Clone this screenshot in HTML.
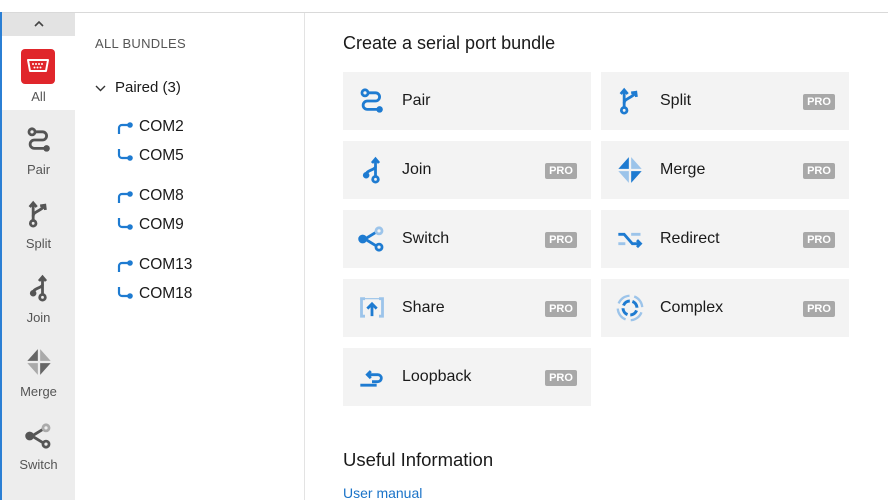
<!DOCTYPE html>
<html><head><meta charset="utf-8"><style>
*{margin:0;padding:0;box-sizing:border-box}
body{width:888px;height:500px;overflow:hidden;background:#fff;font-family:"Segoe UI","Liberation Sans",sans-serif;color:#1a1a1a;position:relative}
.topline{position:absolute;left:0;top:12px;width:888px;height:1px;background:#d9d9d9}
.blue{position:absolute;left:0;top:12px;width:2px;height:488px;background:#2b7fd4}
.side{position:absolute;left:2px;top:13px;width:73px;height:487px;background:#ededed}
.chev{position:absolute;left:0;top:0;width:73px;height:23px;background:#e3e3e3;text-align:center}
.allitem{position:absolute;left:0;top:23px;width:73px;height:74px;background:#fff}
.red{position:absolute;left:19px;top:13px;width:34px;height:35px;background:#e0262b;border-radius:4px}
.slab{position:absolute;width:73px;text-align:center;font-size:13px;color:#555}
.sico{position:absolute;left:23px;width:28px;height:28px}
.mid{position:absolute;left:75px;top:13px;width:230px;height:487px;border-right:1px solid #e3e3e3}
.hdr{position:absolute;left:20px;top:23px;font-size:13px;color:#555;letter-spacing:.3px}
.paired{position:absolute;left:20px;top:66px;font-size:15px}
.com{position:absolute;left:64px;font-size:15.5px}
.cico{position:absolute;left:42px;width:18px;height:14px}
.title{position:absolute;left:343px;top:33px;font-size:18px}
.card{position:absolute;width:248px;height:58px;background:#f3f3f3}
.card svg{position:absolute;left:15px;top:15px;width:28px;height:28px}
.card span.t{position:absolute;left:59px;top:20px;font-size:16px}
.pro{position:absolute;right:14px;top:22px;width:32px;height:16px;background:#a8a8a8;color:#fff;font-size:11px;font-weight:bold;text-align:center;line-height:16px;border-radius:2px}
.h2{position:absolute;left:343px;top:449px;font-size:18.5px}
.link{position:absolute;left:343px;top:485px;font-size:14px;color:#1a73c8}
</style></head><body>
<div class="topline"></div>
<div class="blue"></div>
<div class="side">
 <div class="chev"><svg width="12" height="8" style="margin-top:7px" viewBox="0 0 12 8"><path d="M2 6 L6 2 L10 6" fill="none" stroke="#444" stroke-width="1.6"/></svg></div>
 <div class="allitem">
  <div class="red"><svg width="34" height="35" viewBox="0 0 34 35"><path d="M7 11 H27 L25 22 H9 Z" fill="none" stroke="#fff" stroke-width="2" stroke-linejoin="round"/><g fill="#fff"><circle cx="12" cy="15" r="1"/><circle cx="15" cy="15" r="1"/><circle cx="18" cy="15" r="1"/><circle cx="21" cy="15" r="1"/><circle cx="13.5" cy="18.5" r="1"/><circle cx="16.5" cy="18.5" r="1"/><circle cx="19.5" cy="18.5" r="1"/></g></svg></div>
  <div class="slab" style="top:53px">All</div>
 </div>
 <svg class="sico" style="top:113px" viewBox="0 0 24 24" fill="none" stroke="#555" stroke-width="2.4"><circle cx="6" cy="5" r="2.6"/><path d="M8.6 5 H15 A3.5 3.5 0 0 1 15 12 H8 A3.6 3.6 0 0 0 8 19.2 H17"/><circle cx="18.5" cy="19.2" r="2.8" fill="#555" stroke="none"/></svg>
 <div class="slab" style="top:149px">Pair</div>
 <svg class="sico" style="top:187px" viewBox="0 0 24 24" fill="none" stroke="#555" stroke-width="2.4"><circle cx="7" cy="20" r="2.4"/><path d="M7 17.6 V3"/><path d="M4 6 L7 2.5 L10 6" /><path d="M7 14 C7 10 12 10 16 6"/><path d="M13 5 L17 4.5 L17.5 8.5"/></svg>
 <div class="slab" style="top:223px">Split</div>
 <svg class="sico" style="top:261px" viewBox="0 0 24 24" fill="none" stroke="#555" stroke-width="2.4"><circle cx="15" cy="20" r="2.4"/><path d="M15 17.6 V3"/><path d="M12 6 L15 2.5 L18 6"/><path d="M7 16 C7 12 15 12 15 9"/><circle cx="7" cy="16.5" r="2.8" fill="#555" stroke="none"/></svg>
 <div class="slab" style="top:297px">Join</div>
 <svg class="sico" style="top:335px" viewBox="0 0 24 24"><path d="M11 1 L11 11 L2 11 Z" fill="#666"/><path d="M13 1 L13 11 L22 11 Z" fill="#aaa"/><path d="M2 13 L11 13 L11 23 Z" fill="#aaa"/><path d="M13 13 L22 13 L13 23 Z" fill="#666"/></svg>
 <div class="slab" style="top:371px">Merge</div>
 <svg class="sico" style="top:409px" viewBox="0 0 24 24" fill="none" stroke-width="2.4"><circle cx="4" cy="12" r="2.6" fill="#555" stroke="#555"/><path d="M6 12 L15 6.5 M6 12 L15 17.5" stroke="#555"/><circle cx="18" cy="5" r="2.6" stroke="#aaa"/><circle cx="18" cy="19" r="2.6" stroke="#555"/></svg>
 <div class="slab" style="top:444px">Switch</div>
</div>

<div class="mid">
 <div class="hdr">ALL BUNDLES</div>
 <svg style="position:absolute;left:20px;top:71px" width="11" height="8" viewBox="0 0 11 8"><path d="M1 2 L5.5 6.5 L10 2" fill="none" stroke="#333" stroke-width="1.4"/></svg>
 <div class="paired" style="left:40px">Paired (3)</div>
 <svg class="cico" style="top:108px" viewBox="0 0 18 14"><path d="M2 13 V7 A3 3 0 0 1 5 4 H12" fill="none" stroke="#1e7bd1" stroke-width="2.2"/><circle cx="13" cy="4" r="2.8" fill="#1e7bd1"/></svg>
 <div class="com" style="top:105px">COM2</div>
 <svg class="cico" style="top:135px" viewBox="0 0 18 14"><path d="M2 1 V7 A3 3 0 0 0 5 10 H12" fill="none" stroke="#1e7bd1" stroke-width="2.2"/><circle cx="13" cy="10" r="2.8" fill="#1e7bd1"/></svg>
 <div class="com" style="top:134px">COM5</div>
 <svg class="cico" style="top:177px" viewBox="0 0 18 14"><path d="M2 13 V7 A3 3 0 0 1 5 4 H12" fill="none" stroke="#1e7bd1" stroke-width="2.2"/><circle cx="13" cy="4" r="2.8" fill="#1e7bd1"/></svg>
 <div class="com" style="top:174px">COM8</div>
 <svg class="cico" style="top:204px" viewBox="0 0 18 14"><path d="M2 1 V7 A3 3 0 0 0 5 10 H12" fill="none" stroke="#1e7bd1" stroke-width="2.2"/><circle cx="13" cy="10" r="2.8" fill="#1e7bd1"/></svg>
 <div class="com" style="top:203px">COM9</div>
 <svg class="cico" style="top:246px" viewBox="0 0 18 14"><path d="M2 13 V7 A3 3 0 0 1 5 4 H12" fill="none" stroke="#1e7bd1" stroke-width="2.2"/><circle cx="13" cy="4" r="2.8" fill="#1e7bd1"/></svg>
 <div class="com" style="top:243px">COM13</div>
 <svg class="cico" style="top:273px" viewBox="0 0 18 14"><path d="M2 1 V7 A3 3 0 0 0 5 10 H12" fill="none" stroke="#1e7bd1" stroke-width="2.2"/><circle cx="13" cy="10" r="2.8" fill="#1e7bd1"/></svg>
 <div class="com" style="top:272px">COM18</div>
</div>

<div class="title">Create a serial port bundle</div>

<div class="card" style="left:343px;top:72px"><svg viewBox="0 0 24 24" fill="none" stroke="#1e7bd1" stroke-width="2.4"><circle cx="6" cy="5" r="2.6"/><path d="M8.6 5 H15 A3.5 3.5 0 0 1 15 12 H8 A3.6 3.6 0 0 0 8 19.2 H17"/><circle cx="18.5" cy="19.2" r="2.8" fill="#1e7bd1" stroke="none"/></svg><span class="t">Pair</span></div>
<div class="card" style="left:601px;top:72px"><svg viewBox="0 0 24 24" fill="none" stroke="#1e7bd1" stroke-width="2.4"><circle cx="7" cy="20" r="2.4"/><path d="M7 17.6 V3"/><path d="M4 6 L7 2.5 L10 6"/><path d="M7 14 C7 10 12 10 16 6"/><path d="M13 5 L17 4.5 L17.5 8.5"/></svg><span class="t">Split</span><div class="pro">PRO</div></div>

<div class="card" style="left:343px;top:141px"><svg viewBox="0 0 24 24" fill="none" stroke="#1e7bd1" stroke-width="2.4"><circle cx="15" cy="20" r="2.4"/><path d="M15 17.6 V3"/><path d="M12 6 L15 2.5 L18 6"/><path d="M7 16 C7 12 15 12 15 9"/><circle cx="7" cy="16.5" r="2.8" fill="#1e7bd1" stroke="none"/></svg><span class="t">Join</span><div class="pro">PRO</div></div>
<div class="card" style="left:601px;top:141px"><svg viewBox="0 0 24 24"><path d="M11 1 L11 11 L2 11 Z" fill="#1e7bd1"/><path d="M13 1 L13 11 L22 11 Z" fill="#9cc4ea"/><path d="M2 13 L11 13 L11 23 Z" fill="#9cc4ea"/><path d="M13 13 L22 13 L13 23 Z" fill="#1e7bd1"/></svg><span class="t">Merge</span><div class="pro">PRO</div></div>

<div class="card" style="left:343px;top:210px"><svg viewBox="0 0 24 24" fill="none" stroke-width="2.4"><circle cx="4" cy="12" r="2.6" fill="#1e7bd1" stroke="#1e7bd1"/><path d="M6 12 L15 6.5 M6 12 L15 17.5" stroke="#1e7bd1"/><circle cx="18" cy="5" r="2.6" stroke="#9cc4ea"/><circle cx="18" cy="19" r="2.6" stroke="#1e7bd1"/></svg><span class="t">Switch</span><div class="pro">PRO</div></div>
<div class="card" style="left:601px;top:210px"><svg viewBox="0 0 24 24" fill="none" stroke-width="2.4"><path d="M2 8 H7 L14 16 H21" stroke="#1e7bd1"/><path d="M18 13 L21 16 L18 19" stroke="#1e7bd1"/><path d="M13 8 H21 M2 16 H8" stroke="#9cc4ea"/></svg><span class="t">Redirect</span><div class="pro">PRO</div></div>

<div class="card" style="left:343px;top:279px"><svg viewBox="0 0 24 24" fill="none" stroke-width="2.4"><path d="M6 4 H3 V19 H6 M18 4 H21 V19 H18" stroke="#9cc4ea"/><path d="M6 4 H18" stroke="#9cc4ea" stroke-width="1"/><path d="M12 19 V9 M8 12.5 L12 8.5 L16 12.5" stroke="#1e7bd1"/></svg><span class="t">Share</span><div class="pro">PRO</div></div>
<div class="card" style="left:601px;top:279px"><svg viewBox="0 0 24 24" fill="none" stroke-width="2"><circle cx="12" cy="12" r="10.5" stroke="#9cc4ea" stroke-dasharray="12 4.5" transform="rotate(-70 12 12)"/><circle cx="12" cy="12" r="6" stroke="#1e7bd1" stroke-width="2.6" stroke-dasharray="7 2.4" transform="rotate(-70 12 12)"/></svg><span class="t">Complex</span><div class="pro">PRO</div></div>

<div class="card" style="left:343px;top:348px"><svg viewBox="0 0 24 24" fill="none" stroke="#1e7bd1" stroke-width="2.4"><path d="M2 19 H16"/><path d="M8 10 H17 A3 3 0 0 1 17 16 H12"/><path d="M11 7 L8 10 L11 13"/></svg><span class="t">Loopback</span><div class="pro">PRO</div></div>

<div class="h2">Useful Information</div>
<div class="link">User manual</div>
</body></html>
